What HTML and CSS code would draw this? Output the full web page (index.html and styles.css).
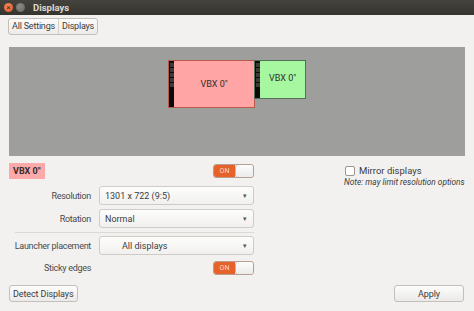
FILE: index.html
```html
<!DOCTYPE html>
<html lang="en">
<head>
  <meta charset="UTF-8">
  <title>Displays</title>
  <link rel="stylesheet" href="styles.css">
</head>
<body>
  <div class="window">
    <div class="titlebar">
      <span class="wbtn close">×</span>
      <span class="wbtn min"></span>
      <span class="title">Displays</span>
    </div>
    <div class="toolbar">
      <div class="crumbs">
        <span class="crumb">All Settings</span>
        <span class="crumb">Displays</span>
      </div>
    </div>
    <div class="arrange">
      <div class="monitors">
        <div class="monitor primary">
          <div class="launcher"><i></i><i></i><i></i><i></i><i></i></div>
          <div class="mon-name">VBX 0"</div>
        </div>
        <div class="monitor second">
          <div class="launcher"><i></i><i></i><i></i><i></i><i></i></div>
          <div class="mon-name">VBX 0"</div>
        </div>
      </div>
    </div>
    <div class="settings">
      <div class="left">
        <div class="head-row">
          <span class="mon-label">VBX 0"</span>
          <span class="switch"><span class="on">ON</span><span class="knob"></span></span>
        </div>
        <div class="form first">
          <label class="lbl">Resolution</label>
          <div class="combo"><span>1301 x 722 (9:5)</span><span class="arrow">▾</span></div>
          <label class="lbl">Rotation</label>
          <div class="combo"><span>Normal</span><span class="arrow">▾</span></div>
        </div>
        <div class="sep"></div>
        <div class="form">
          <label class="lbl">Launcher placement</label>
          <div class="combo center"><span>All displays</span><span class="arrow">▾</span></div>
          <label class="lbl">Sticky edges</label>
          <div class="switch-cell"><span class="switch"><span class="on">ON</span><span class="knob"></span></span></div>
        </div>
      </div>
      <div class="right">
        <div class="check-row"><span class="checkbox"></span>Mirror displays</div>
        <div class="note">Note: may limit resolution options</div>
      </div>
    </div>
    <div class="footer">
      <button class="btn">Detect Displays</button>
      <button class="btn apply">Apply</button>
    </div>
  </div>
</body>
</html>
```

FILE: styles.css
```css
body {
  margin: 0;
  width: 474px;
  height: 311px;
  overflow: hidden;
  background: #f2f1f0;
  font-family: Roboto, "Noto Sans", sans-serif;
  font-size: 9.5px;
  color: #3c3c3c;
}
.window {
  display: flex;
  flex-direction: column;
  height: 311px;
}
.window > * {
  flex-shrink: 0;
}
.titlebar {
  height: 15px;
  background: linear-gradient(#45433e, #35342f);
  display: flex;
  align-items: center;
  padding-left: 4px;
  gap: 3px;
}
.wbtn {
  width: 9px;
  height: 9px;
  border-radius: 50%;
  display: flex;
  align-items: center;
  justify-content: center;
  font-size: 8px;
  line-height: 1;
  color: #3a2a20;
}
.close {
  background: radial-gradient(circle at 40% 35%, #f58a5e, #e0542a);
}
.min {
  background: radial-gradient(circle at 40% 35%, #8d8c87, #64635e);
}
.title {
  margin-left: 5px;
  color: #dfdbd2;
  font-weight: bold;
  font-size: 9.5px;
}
.toolbar {
  padding: 3px 8px 0;
  height: 29px;
  box-sizing: border-box;
}
.crumbs {
  display: inline-flex;
  border: 1px solid #c3bfb9;
  border-radius: 3px;
  background: linear-gradient(#fbfbfa, #ecebe9);
  height: 17px;
  box-sizing: border-box;
}
.crumb {
  padding: 0 3px;
  line-height: 15px;
  font-size: 9px;
  letter-spacing: -0.2px;
  color: #3c3c3c;
}
.crumb + .crumb {
  border-left: 1px solid #d3cfca;
}
.arrange {
  margin: 3px 9px 0;
  height: 109px;
  background: #9e9e9c;
  position: relative;
}
.monitors {
  position: absolute;
  left: 159px;
  top: 13px;
  display: flex;
  align-items: flex-start;
}
.monitor {
  display: flex;
  box-sizing: border-box;
}
.primary {
  width: 87px;
  height: 48px;
  background: #ffa5a5;
  border: 1px solid #b85a4a;
}
.second {
  width: 52px;
  height: 39px;
  background: #a6f7a0;
  border: 1px solid #55705a;
  margin-left: -1px;
}
.launcher {
  width: 5px;
  background: #0c0a08;
  display: flex;
  flex-direction: column;
  gap: 1px;
  padding-top: 2px;
  align-items: center;
}
.launcher i {
  display: block;
  width: 4px;
  height: 4px;
  background: #3b3a38;
}
.mon-name {
  flex: 1;
  display: flex;
  align-items: center;
  justify-content: center;
  font-size: 9px;
  color: #2e2e2e;
}
.second .mon-name {
  align-items: flex-start;
  padding-top: 12px;
}
.settings {
  display: flex;
  padding: 7px 9px 0;
}
.left {
  width: 245px;
  flex-shrink: 0;
}
.head-row {
  display: flex;
  justify-content: space-between;
  align-items: center;
  height: 16px;
}
.mon-label {
  background: #fbaaa9;
  font-weight: bold;
  font-size: 9px;
  padding: 0 4px;
  line-height: 16px;
  color: #3a2a2a;
}
.switch {
  display: inline-flex;
  width: 41px;
  height: 14px;
  border-radius: 3px;
  border: 1px solid #b79e90;
  box-sizing: border-box;
  overflow: hidden;
  background: #f8f7f6;
}
.switch .on {
  width: 21px;
  background: #e5622b;
  color: #fbd9c8;
  font-size: 7px;
  line-height: 12px;
  text-align: center;
}
.switch .knob {
  flex: 1;
  background: linear-gradient(#fdfdfd, #ecebea);
  border-radius: 3px;
  border-left: 1px solid #c7b4aa;
}
.form {
  display: grid;
  grid-template-columns: 82px 155px;
  column-gap: 8px;
  row-gap: 4px;
  align-items: center;
}
.form.first {
  margin-top: 7px;
}
.lbl {
  text-align: right;
  white-space: nowrap;
  font-size: 9px;
  letter-spacing: -0.3px;
  color: #4a4a4a;
}
.combo {
  height: 19px;
  border: 1px solid #cfcbc6;
  border-radius: 3px;
  background: linear-gradient(#fdfdfc, #f1f0ee);
  box-sizing: border-box;
  display: flex;
  align-items: center;
  justify-content: space-between;
  padding: 0 6px 0 5px;
  font-size: 9px;
  color: #3c3c3c;
}
.combo.center span:first-child {
  margin-left: 17px;
}
.arrow {
  font-size: 7px;
  color: #555;
}
.sep {
  height: 1px;
  background: #dcd9d5;
  margin: 4px 0 3px 6px;
}
.switch-cell {
  display: flex;
  justify-content: flex-end;
  height: 18px;
  align-items: center;
}
.right {
  margin-left: 90px;
  padding-top: 2px;
}
.check-row {
  display: flex;
  align-items: center;
  gap: 4px;
  margin-left: 1px;
  color: #3c3c3c;
}
.checkbox {
  width: 8px;
  height: 8px;
  border: 1px solid #9a9792;
  border-radius: 2px;
  background: #fff;
}
.note {
  font-style: italic;
  font-size: 8.3px;
  white-space: nowrap;
  color: #3c3c3c;
  margin-top: 1px;
}
.footer {
  margin-top: auto;
  display: flex;
  justify-content: space-between;
  padding: 0 10px 9px 9px;
}
.btn {
  font-family: inherit;
  font-size: 9px;
  letter-spacing: -0.1px;
  color: #3c3c3c;
  height: 17px;
  padding: 0 3px;
  border: 1px solid #c3bfb9;
  border-radius: 3px;
  background: linear-gradient(#fcfcfb, #ebeae8);
}
.apply {
  width: 70px;
}
```
